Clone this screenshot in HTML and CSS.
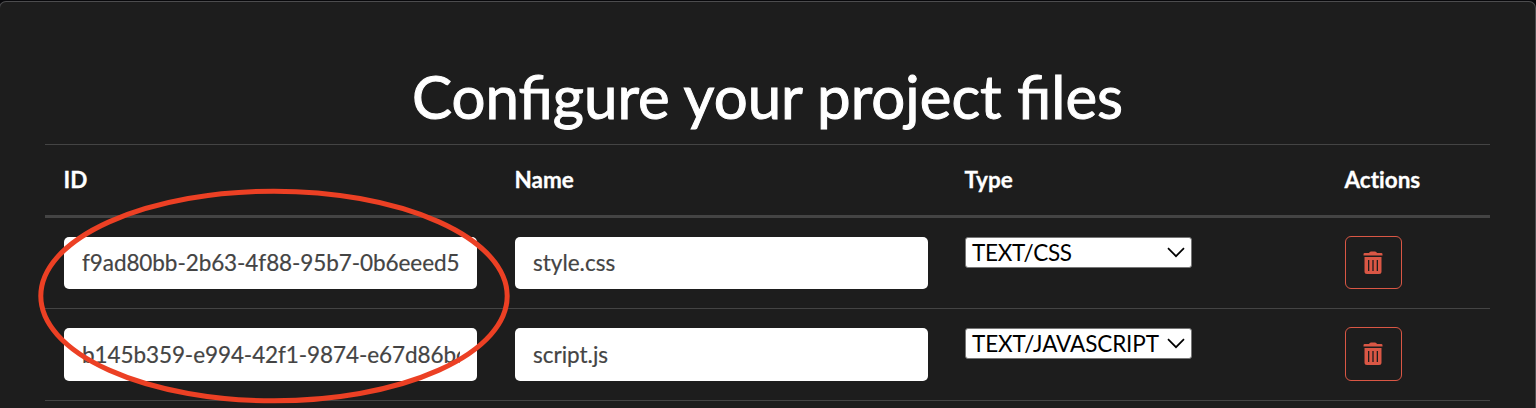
FILE: index.html
```html
<!DOCTYPE html>
<html lang="en">
<head>
<meta charset="utf-8">
<title>Configure your project files</title>
<link rel="stylesheet" href="styles.css">
</head>
<body>
<main class="panel">
  <h1 class="title">Configure your project files</h1>
  <div class="table">
    <div class="row head">
      <div class="cell">ID</div>
      <div class="cell">Name</div>
      <div class="cell">Type</div>
      <div class="cell">Actions</div>
    </div>
    <div class="row first">
      <div class="cell"><div class="field"><span class="value id">f9ad80bb-2b63-4f88-95b7-0b6eeed5</span></div></div>
      <div class="cell"><div class="field"><span class="value">style.css</span></div></div>
      <div class="cell"><div class="select"><span>TEXT/CSS</span><svg class="chevron" viewBox="0 0 18 11"><path d="M1 1.2L9 9.2L17 1.2"/></svg></div></div>
      <div class="cell"><button class="delete" aria-label="Delete"><svg class="trash" viewBox="0 0 20 24"><path d="M.5 3.2Q.5 2 1.7 2H6Q6.500 .5 8 .5H12Q13.500 .5 14 2H18.300Q19.500 2 19.500 3.200V4.500H.5Z"/><path fill-rule="evenodd" d="M1.500 6H18.500V20.500Q18.500 23 16 23H4Q1.500 23 1.500 20.500ZM5 9V20H6.300V9ZM9.350 9V20H10.650V9ZM13.700 9V20H15V9Z"/></svg></button></div>
    </div>
    <div class="row second">
      <div class="cell"><div class="field"><span class="value id">b145b359-e994-42f1-9874-e67d86bc</span></div></div>
      <div class="cell"><div class="field"><span class="value">script.js</span></div></div>
      <div class="cell"><div class="select"><span>TEXT/JAVASCRIPT</span><svg class="chevron" viewBox="0 0 18 11"><path d="M1 1.2L9 9.2L17 1.2"/></svg></div></div>
      <div class="cell"><button class="delete" aria-label="Delete"><svg class="trash" viewBox="0 0 20 24"><path d="M.5 3.2Q.5 2 1.7 2H6Q6.500 .5 8 .5H12Q13.500 .5 14 2H18.300Q19.500 2 19.500 3.200V4.500H.5Z"/><path fill-rule="evenodd" d="M1.500 6H18.500V20.500Q18.500 23 16 23H4Q1.500 23 1.500 20.500ZM5 9V20H6.300V9ZM9.350 9V20H10.650V9ZM13.700 9V20H15V9Z"/></svg></button></div>
    </div>
  </div>
</main>
<svg class="highlight" viewBox="0 0 474 218"><ellipse cx="237" cy="109" rx="233.200" ry="104.800"/></svg>
</body>
</html>
```
FILE: styles.css
```css
* { box-sizing: border-box; }
body {
  margin: 0;
  height: 408px;
  overflow: hidden;
  padding-top: 1px;
  background: #08080b;
  color: #fff;
  font-family: Lato, sans-serif;
  font-size: 22.5px;
}
.panel {
  width: 1537px;
  height: 407px;
  margin-left: -1px;
  padding: 58px 45px 0;
  background: #1d1d1d;
  border: 1px solid #4c4c4e;
  border-bottom: 0;
  border-radius: 7px 7px 0 0;
}
.title {
  margin: 0;
  height: 84px;
  line-height: 72px;
  font-size: 60px;
  font-weight: 400;
  text-align: center;
  white-space: nowrap;
  -webkit-text-stroke: 1px #fff;
}
.table { width: 1445px; border-top: 1px solid #444; }
.row {
  display: grid;
  grid-template-columns: 451px 450px 380px 164px;
  border-bottom: 1px solid #444;
}
.cell { padding: 19px 18px 0 19px; }
.head {
  height: 73px;
  border-bottom-width: 3px;
  font-weight: 700;
  line-height: 32px;
  font-variant-ligatures: none;
}
.head .cell {
  padding-left: 18.500px;
  -webkit-text-stroke: 0.3px #fff;
}
.first { height: 91px; }
.second { height: 92px; }
.field {
  display: flex;
  align-items: center;
  width: 413px;
  height: 52px;
  padding: 0 17px 0 18px;
  background: #fff;
  border-radius: 5px;
  color: #444;
  -webkit-text-stroke: 0.2px #444;
}
.first .field { padding-bottom: 2px; }
.second .field { height: 53px; }
.value { overflow: hidden; white-space: nowrap; }
.id { letter-spacing: -0.08px; }
.select {
  display: flex;
  align-items: center;
  justify-content: space-between;
  width: 227px;
  height: 31px;
  padding: 0 6px;
  background: #fff;
  border: 1px solid #767676;
  border-radius: 3px;
  color: #000;
  white-space: nowrap;
  letter-spacing: -0.12px;
}
.first .select { letter-spacing: -0.3px; }
.chevron { width: 18px; height: 11px; fill: none; stroke: #000; stroke-width: 1.7; }
.delete {
  display: flex;
  align-items: center;
  justify-content: center;
  width: 57px;
  height: 53px;
  margin-top: -1px;
  padding: 0 1px 0 0;
  background: transparent;
  border: 1px solid #da5745;
  border-radius: 6px;
}
.second .delete { height: 54px; }
.trash { width: 20px; height: 24px; fill: #da5745; }
.highlight {
  position: absolute;
  left: 36.500px;
  top: 187px;
  width: 474px;
  height: 218px;
  fill: none;
  stroke: #ec4024;
  stroke-width: 5;
}
```
